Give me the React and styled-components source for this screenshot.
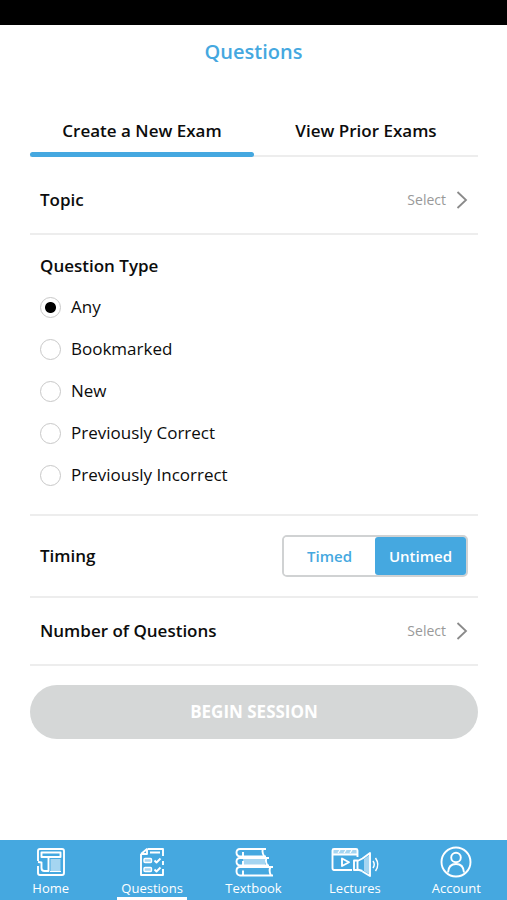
import React, { useState } from "react";
import styled, { createGlobalStyle } from "styled-components";

const questionTypes = [
  "Any",
  "Bookmarked",
  "New",
  "Previously Correct",
  "Previously Incorrect",
];

const ChevronIcon = () => (
  <svg width="12" height="18" viewBox="0 0 12 18" fill="none" stroke="#8a8a8a" strokeWidth="1.8" aria-hidden="true">
    <path d="M1.5 1L10 9L1.5 17" />
  </svg>
);

const HomeIcon = () => (
  <Icon width="30" viewBox="0 0 30 30">
    <path d="M2 14V4Q2 2 4 2H26Q28 2 28 4V26Q28 28 26 28H4Q2 28 2 26V19" />
    <rect x="5.5" y="5.5" width="19" height="4.5" />
    <path d="M12.5 10V24H8.5Q5.5 24 5.5 21V15.5L2 15" />
    <rect className="tint" x="14.5" y="12" width="10" height="12" />
    <path d="M14 24.5H25" strokeWidth="1" />
  </Icon>
);

const QuestionsIcon = () => (
  <Icon width="26" viewBox="0 0 26 30">
    <path d="M2 7V28H24V22M24 9V2H9M2 7L8 2V7H2M11 5.5H21" />
    <path d="M24 14V18" />
    <rect className="tint" x="5" y="11.5" width="7.5" height="4" />
    <rect className="tint" x="5" y="20.5" width="7.5" height="4" />
    <rect x="5" y="11.5" width="7.5" height="4" rx="1" strokeWidth="1.4" />
    <rect x="5" y="20.5" width="7.5" height="4" rx="1" strokeWidth="1.4" />
    <path d="M15.5 13.5L17.5 15.5L21.5 11.5M15.5 22.5L17.5 24.5L21.5 20.5" />
  </Icon>
);

const TextbookIcon = () => (
  <Icon width="38" viewBox="0 0 38 30">
    <path className="tint" d="M8 12H30V18H8Z" />
    <path d="M31 2H5Q1.500 2 1.500 5.500T5 9.500H31M28 2Q26.500 5.500 29.500 9.500M8 5V8.500" />
    <path d="M34 11H5Q1.500 11 1.500 14.500T5 18.500H34M31.500 11Q30 14.500 32.500 18.500M8 14V17.500" />
    <path d="M38 20H5Q1.500 20 1.500 24T5 28.500H38M35.500 20Q33.500 24 36 28.500M8 23.500V28" />
  </Icon>
);

const LecturesIcon = () => (
  <Icon width="48" viewBox="0 0 48 30">
    <path className="tint" d="M2 2H26V7H2Z" />
    <path d="M21 23H3Q1.500 23 1.500 21V3.500Q1.500 2 3 2H25Q26.500 2 26.500 3.500V10M1.500 7.500H26.500" />
    <path d="M7 6L9 3M13 6L15 3M19 6L21 3" strokeWidth="1.2" />
    <path d="M11 11.500V19L18 15.250Z" />
    <path className="tint" d="M33 12L38 8.500V27L33 24Z" />
    <path d="M23 13.500H26.500V23H23ZM26.500 14L31.500 11.500M26.500 22.500L31.500 24M31.500 11.500L39 6V29L31.500 24.500" />
    <path d="M42 14Q44.500 17.500 42 21M44.500 11Q49 17.500 44.500 24" strokeWidth="1.5" />
  </Icon>
);

const AccountIcon = () => (
  <Icon width="32" viewBox="0 0 32 30">
    <circle cx="16" cy="15" r="14.500" />
    <circle cx="16" cy="10.500" r="4.800" />
    <path d="M8 25.500Q8.500 17 16 17T24 25.500" />
  </Icon>
);

const navItems = [
  { label: "Home", icon: <HomeIcon /> },
  { label: "Questions", icon: <QuestionsIcon /> },
  { label: "Textbook", icon: <TextbookIcon /> },
  { label: "Lectures", icon: <LecturesIcon /> },
  { label: "Account", icon: <AccountIcon /> },
];

const SelectRow = ({ id, label }) => (
  <Row>
    <RowTitle id={id}>{label}</RowTitle>
    <SelectButton type="button" aria-describedby={id}>
      Select
      <ChevronIcon />
    </SelectButton>
  </Row>
);

const App = () => {
  const [tab, setTab] = useState("create");
  const [type, setType] = useState("Any");
  const [timing, setTiming] = useState("Untimed");

  return (
    <Page>
      <GlobalStyle />
      <StatusBar />
      <Header>
        <h1>Questions</h1>
      </Header>
      <Main>
        <Tabs role="tablist">
          <Tab
            type="button"
            role="tab"
            aria-selected={tab === "create"}
            $active={tab === "create"}
            onClick={() => setTab("create")}
          >
            Create a New Exam
          </Tab>
          <Tab
            type="button"
            role="tab"
            aria-selected={tab === "prior"}
            $active={tab === "prior"}
            onClick={() => setTab("prior")}
          >
            View Prior Exams
          </Tab>
        </Tabs>
        <SelectRow id="topic" label="Topic" />
        <TypeSection role="radiogroup" aria-labelledby="question-type">
          <RowTitle id="question-type">Question Type</RowTitle>
          <Options>
            {questionTypes.map((item) => (
              <Option key={item}>
                <input
                  type="radio"
                  name="type"
                  checked={type === item}
                  onChange={() => setType(item)}
                />
                {item}
              </Option>
            ))}
          </Options>
        </TypeSection>
        <Row $tall>
          <RowTitle id="timing">Timing</RowTitle>
          <Toggle role="group" aria-labelledby="timing">
            {["Timed", "Untimed"].map((item) => (
              <ToggleButton
                key={item}
                type="button"
                aria-pressed={timing === item}
                $active={timing === item}
                onClick={() => setTiming(item)}
              >
                {item}
              </ToggleButton>
            ))}
          </Toggle>
        </Row>
        <SelectRow id="number" label="Number of Questions" />
        <BeginButton type="button" disabled>
          BEGIN SESSION
        </BeginButton>
      </Main>
      <Nav>
        {navItems.map(({ label, icon }) => (
          <NavLink key={label} href="#" $active={label === "Questions"}>
            {icon}
            <span>{label}</span>
          </NavLink>
        ))}
      </Nav>
    </Page>
  );
};

export default App;

const GlobalStyle = createGlobalStyle`
  :root {
    --color-blue: #45a8e0;
    --color-line: #ededed;
    --color-text: #0c0c0c;
  }
  * {
    box-sizing: border-box;
    margin: 0;
    padding: 0;
  }
  body {
    background: #fff;
    color: var(--color-text);
    font-family: "Open Sans", "Noto Sans", sans-serif;
  }
  button {
    font-family: inherit;
    border: none;
    background: none;
    cursor: pointer;
  }
`;

const Page = styled.div`
  display: flex;
  flex-direction: column;
  min-height: 100vh;
`;

const StatusBar = styled.div`
  height: 25px;
  background: #000;
`;

const Header = styled.header`
  padding: 12px 30px;
  text-align: center;
  > h1 {
    font-size: 20px;
    line-height: 30px;
    font-weight: 600;
    color: var(--color-blue);
  }
`;

const Main = styled.main`
  flex: 1;
  display: flex;
  flex-direction: column;
  padding: 40px 29px 20px 30px;
`;

const Tabs = styled.div`
  display: flex;
  margin-bottom: 10px;
  box-shadow: inset 0 -2px 0 var(--color-line);
`;

const Tab = styled.button`
  flex: 1;
  font-size: 17px;
  line-height: 24px;
  font-weight: 600;
  color: var(--color-text);
  &::after {
    content: "";
    display: block;
    height: 5px;
    margin-top: 9px;
    border-radius: 3px;
    background: ${(props) => (props.$active ? "var(--color-blue)" : "transparent")};
  }
`;

const Row = styled.section`
  display: flex;
  justify-content: space-between;
  align-items: center;
  padding: ${(props) => (props.$tall ? "19px 10px" : "21px 10px")};
  border-bottom: 2px solid var(--color-line);
`;

const RowTitle = styled.h2`
  font-size: 17px;
  line-height: 24px;
  font-weight: 600;
`;

const SelectButton = styled.button`
  display: flex;
  align-items: center;
  gap: 10px;
  font-size: 14px;
  line-height: 24px;
  color: #999;
`;

const TypeSection = styled.section`
  padding: 19px 10px 18px;
  border-bottom: 2px solid var(--color-line);
`;

const Options = styled.div`
  display: flex;
  flex-direction: column;
  margin-top: 8px;
`;

const Option = styled.label`
  display: flex;
  align-items: center;
  gap: 10px;
  font-size: 17px;
  line-height: 42px;
  > input {
    appearance: none;
    width: 21px;
    height: 21px;
    border: 1px solid #c8c8c8;
    border-radius: 50%;
  }
  > input:checked {
    background: radial-gradient(circle, #000 5px, transparent 6px);
  }
`;

const Toggle = styled.div`
  display: flex;
  width: 186px;
  border: 2px solid #d0d2d3;
  border-radius: 5px;
`;

const ToggleButton = styled.button`
  flex: 1;
  font-size: 15px;
  line-height: 38px;
  font-weight: 600;
  border-radius: 3px;
  color: ${(props) => (props.$active ? "#fff" : "var(--color-blue)")};
  background: ${(props) => (props.$active ? "var(--color-blue)" : "#fff")};
`;

const BeginButton = styled.button`
  margin-top: 19px;
  padding: 15px;
  border-radius: 27px;
  font-size: 17px;
  line-height: 24px;
  font-weight: 700;
  color: #fff;
  background: #d5d7d7;
`;

const Nav = styled.nav`
  display: flex;
  background: var(--color-blue);
`;

const NavLink = styled.a`
  flex: 1;
  display: flex;
  flex-direction: column;
  align-items: center;
  padding-top: 7px;
  color: #fff;
  text-decoration: none;
  > span {
    padding: 2px 4px 0;
    font-size: 13px;
    line-height: 18px;
    border-bottom: 3px solid ${(props) => (props.$active ? "#fff" : "transparent")};
  }
`;

const Icon = styled.svg.attrs({ height: 30, "aria-hidden": true })`
  fill: none;
  stroke: #fff;
  stroke-width: 1.9;
  stroke-linejoin: round;
  overflow: visible;
  .tint {
    fill: #a5d5f1;
    stroke: none;
  }
`;
